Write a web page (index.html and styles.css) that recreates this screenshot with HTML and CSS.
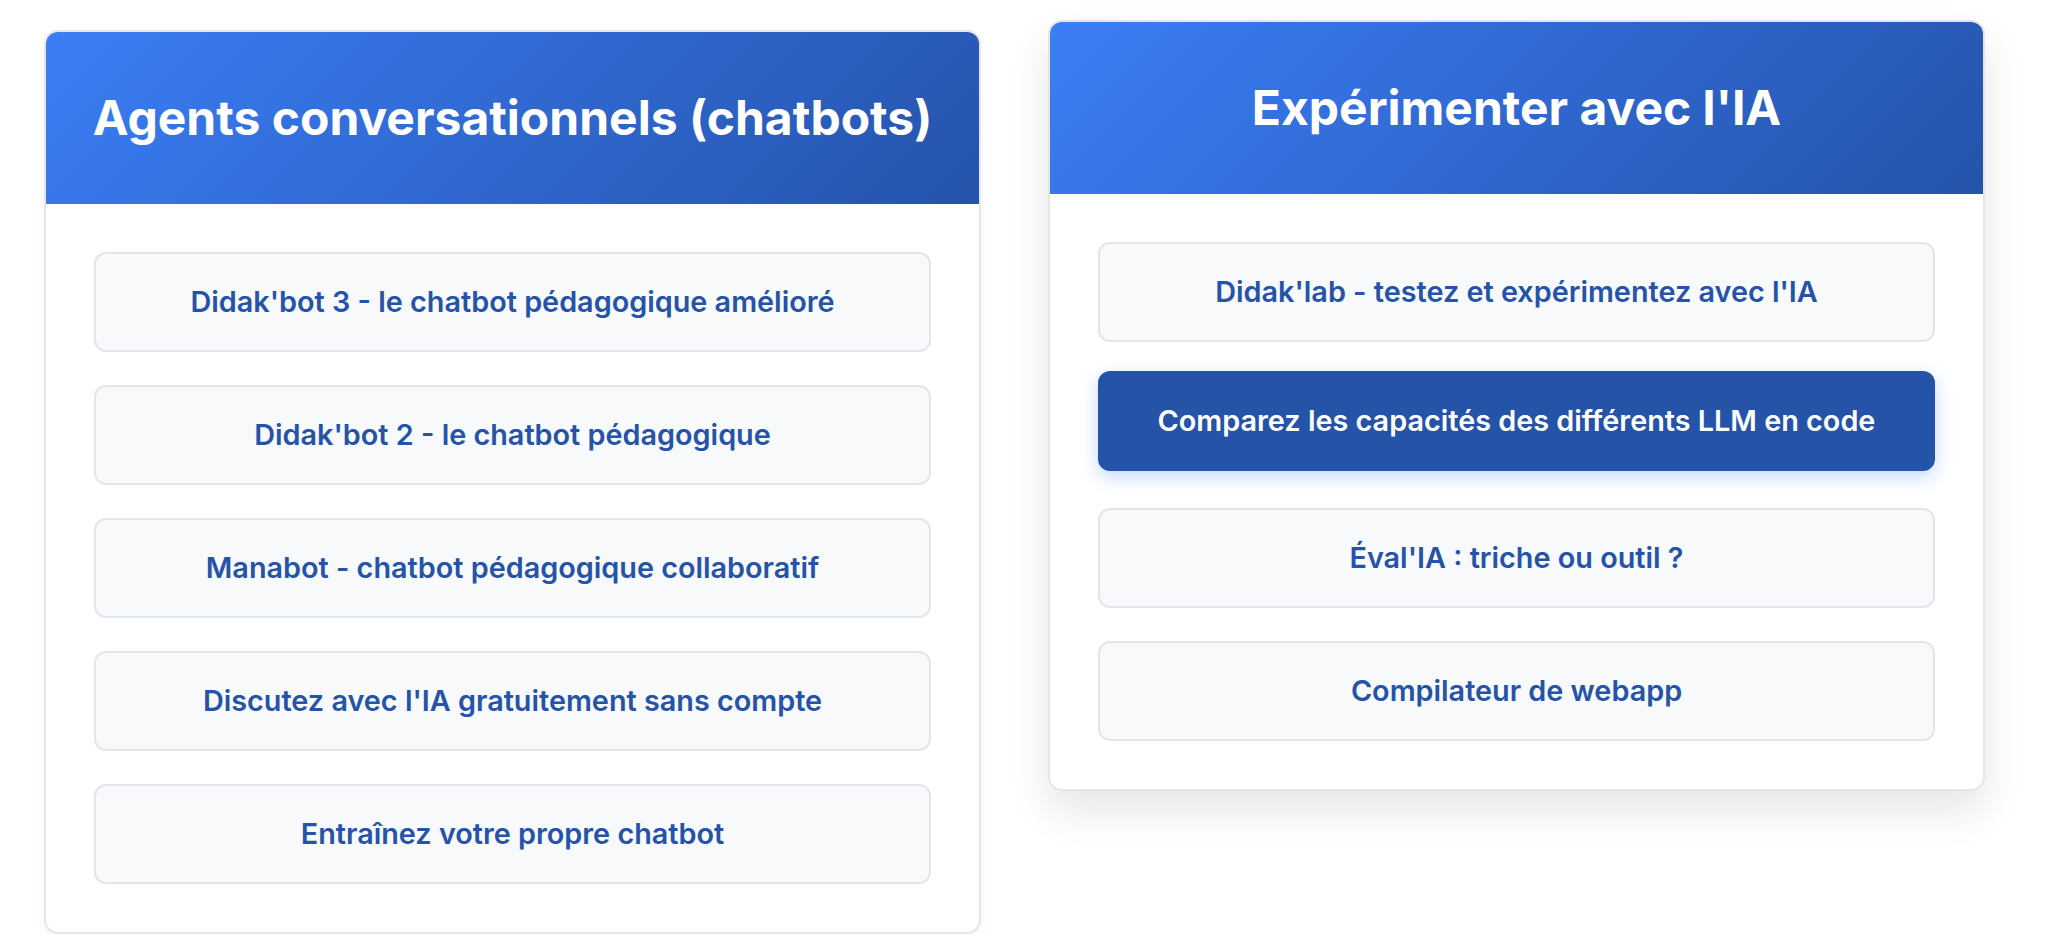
FILE: index.html
```html
<!DOCTYPE html>
<html lang="fr">
<head>
<meta charset="utf-8">
<title>Outils IA</title>
<link rel="stylesheet" href="styles.css">
</head>
<body>
<main class="grid">
  <section class="card">
    <header class="card-header">
      <h2 class="card-title">Agents conversationnels (chatbots)</h2>
    </header>
    <div class="card-body">
      <a class="tool-btn" href="#">Didak'bot 3 - le chatbot pédagogique amélioré</a>
      <a class="tool-btn" href="#">Didak'bot 2 - le chatbot pédagogique</a>
      <a class="tool-btn" href="#">Manabot - chatbot pédagogique collaboratif</a>
      <a class="tool-btn" href="#">Discutez avec l'IA gratuitement sans compte</a>
      <a class="tool-btn" href="#">Entraînez votre propre chatbot</a>
    </div>
  </section>
  <section class="card card-hover">
    <header class="card-header">
      <h2 class="card-title">Expérimenter avec l'IA</h2>
    </header>
    <div class="card-body">
      <a class="tool-btn" href="#">Didak'lab - testez et expérimentez avec l'IA</a>
      <a class="tool-btn tool-btn-active" href="#">Comparez les capacités des différents LLM en code</a>
      <a class="tool-btn" href="#">Éval'IA : triche ou outil ?</a>
      <a class="tool-btn" href="#">Compilateur de webapp</a>
    </div>
  </section>
</main>
</body>
</html>
```
FILE: styles.css
```css
* {
  box-sizing: border-box;
}

html, body {
  margin: 0;
  padding: 0;
  background: #ffffff;
}

body {
  font-family: Inter, "Noto Sans", "Liberation Sans", sans-serif;
}

.grid {
  display: flex;
  align-items: flex-start;
  gap: 67px;
  padding: 30px 0 0 44px;
}

.card {
  width: 937px;
  flex: 0 0 937px;
  background: #ffffff;
  border: 2px solid #e3e6eb;
  border-radius: 14px;
  overflow: hidden;
  box-shadow: 0 4px 14px rgba(0, 0, 0, 0.04);
}

.card-hover {
  transform: translateY(-10px);
  box-shadow: 0 20px 40px rgba(0, 0, 0, 0.1);
}

.card-header {
  background: linear-gradient(135deg, #3b7ef6 0%, #2553ab 100%);
  padding: 57px 20px;
  text-align: center;
}

.card-title {
  margin: 0;
  color: #ffffff;
  font-size: 48px;
  font-weight: 700;
  line-height: 57.5px;
}

.card-body {
  display: flex;
  flex-direction: column;
  gap: 33px;
  padding: 48px;
}

.tool-btn {
  display: flex;
  align-items: center;
  justify-content: center;
  height: 100px;
  padding: 0 24px;
  background: #f8f9fb;
  border: 2px solid #e2e5ea;
  border-radius: 12px;
  color: #2453a8;
  font-size: 28.8px;
  font-weight: 600;
  text-decoration: none;
  text-align: center;
}

.tool-btn-active {
  background: #2453a8;
  border-color: #2453a8;
  color: #ffffff;
  transform: translateY(-4px);
  box-shadow: 0 6px 18px rgba(59, 130, 246, 0.3);
}
```
